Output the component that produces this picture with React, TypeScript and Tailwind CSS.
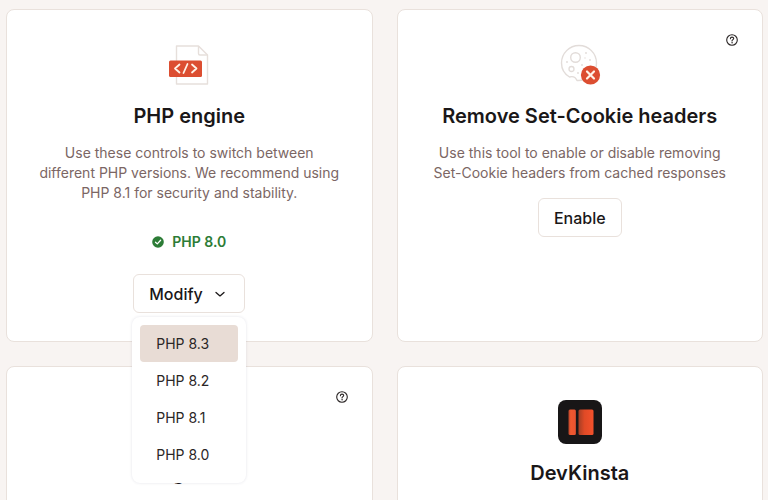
import React, { useState } from 'react';

interface ToolCardProps {
  title: string;
  icon?: React.ReactNode;
  description?: string;
  help?: boolean;
  children?: React.ReactNode;
}

const PHP_VERSIONS = ['PHP 8.3', 'PHP 8.2', 'PHP 8.1', 'PHP 8.0'];

const HelpButton: React.FC = () => (
  <button type="button" aria-label="Help" className="absolute right-6 top-6 text-[#2b2626]">
    <svg className="h-3 w-3" viewBox="0 0 12 12" fill="none" stroke="currentColor" strokeLinecap="round">
      <circle cx="6" cy="6" r="5.3" strokeWidth="1.1" />
      <path d="M4.4 4.7c0-2.1 3.3-2.1 3.3-.1C7.7 5.7 6 5.6 6 7" strokeWidth="1.1" />
      <circle cx="6" cy="8.8" r=".45" fill="currentColor" strokeWidth=".4" />
    </svg>
  </button>
);

const PhpIcon: React.FC = () => (
  <svg className="h-11 w-11" viewBox="0 0 44 44" fill="none">
    <path d="M9.5 3h22l9 9v29h-31z" fill="#fff" stroke="#e6dfdb" strokeWidth="1.4" strokeLinejoin="round" />
    <path d="M31.500 3v7.500a1.500 1.500 0 0 0 1.500 1.500h7.500" stroke="#e6dfdb" strokeWidth="1.4" />
    <rect x="2" y="17.500" width="33" height="16.500" rx="1.500" fill="#dc4e31" />
    <path
      d="M12.500 21.500l-4.500 4 4.500 4M25 21.500l4.500 4-4.500 4M20.500 21l-4 9"
      stroke="#fff3e8"
      strokeWidth="1.8"
      strokeLinecap="round"
      strokeLinejoin="round"
    />
  </svg>
);

const CookieIcon: React.FC = () => (
  <svg className="h-11 w-11" viewBox="0 0 44 44" fill="none">
    <path
      d="M19 37.500c-1.500-3.500-4-4.500-7.500-3.500C6.500 31 3.500 26 3.500 20a17.500 17.500 0 0 1 35 0c0 10-8 18-19.500 17.500z"
      stroke="#e2dcd9"
      strokeWidth="1.4"
      strokeLinejoin="round"
    />
    <circle cx="17.500" cy="14.500" r="4.800" stroke="#e2dcd9" strokeWidth="1.4" />
    <circle cx="13.500" cy="26" r="2.500" stroke="#e2dcd9" strokeWidth="1.3" />
    <g fill="#e2dcd9">
      <circle cx="28" cy="10" r=".9" />
      <circle cx="32" cy="17" r=".9" />
      <circle cx="24" cy="22" r=".9" />
      <circle cx="9" cy="19" r=".9" />
      <circle cx="20" cy="30" r=".9" />
      <circle cx="27" cy="15" r=".7" />
    </g>
    <circle cx="32.500" cy="32" r="9.600" fill="#dc4e31" />
    <path d="M29 28.500l7 7M36 28.500l-7 7" stroke="#fff3e8" strokeWidth="2.200" strokeLinecap="round" />
  </svg>
);

const DevKinstaIcon: React.FC = () => (
  <svg className="h-11 w-11" viewBox="0 0 44 44">
    <defs>
      <linearGradient id="bar-left" x1="0" x2="1">
        <stop offset="0" stopColor="#b8452a" />
        <stop offset=".3" stopColor="#f0582f" />
        <stop offset=".8" stopColor="#ea5430" />
        <stop offset="1" stopColor="#b8452a" />
      </linearGradient>
      <linearGradient id="bar-right" x1="0" x2="1">
        <stop offset="0" stopColor="#a53e25" />
        <stop offset=".4" stopColor="#e04a26" />
        <stop offset="1" stopColor="#f4512c" />
      </linearGradient>
    </defs>
    <rect width="44" height="44" rx="8" fill="#181617" />
    <rect x="10.500" y="9.500" width="7.500" height="25.500" rx="1.500" fill="url(#bar-left)" />
    <rect x="20.500" y="9.500" width="15" height="25.500" rx="1.500" fill="url(#bar-right)" />
  </svg>
);

const ToolCard: React.FC<ToolCardProps> = ({ title, icon, description, help = false, children }) => (
  <section className="relative flex flex-col items-center rounded-lg border border-[#e9e1dc] bg-white px-8 pb-7 pt-[33px] text-center">
    {help && <HelpButton />}
    <div className="h-11">{icon}</div>
    <h2 className="mt-[15px] text-xl leading-7 font-semibold text-[#1a1718]">{title}</h2>
    {description && <p className="mt-[13px] text-sm leading-5 text-[#7b6664]">{description}</p>}
    {children}
  </section>
);

const VersionPicker: React.FC = () => {
  const [open, setOpen] = useState(true);
  const [active, setActive] = useState(PHP_VERSIONS[0]);

  return (
    <div className="relative mt-[22px]">
      <button
        type="button"
        aria-expanded={open}
        onClick={() => setOpen(!open)}
        className="flex h-[39px] w-28 items-center justify-between rounded-md border border-[#e9e1dc] bg-white pl-[15px] pr-[18px] text-base font-medium text-[#1a1718]"
      >
        Modify
        <svg className="h-3 w-3" viewBox="0 0 12 12" fill="none" stroke="currentColor" strokeWidth="1.3" strokeLinecap="round" strokeLinejoin="round">
          <path d="M2 4.400l4 3.500 4-3.500" />
        </svg>
      </button>
      {open && (
        <ul className="absolute -left-px -right-px top-full z-10 mt-1 rounded-lg bg-white px-2 pt-2 pb-2.5 shadow-[0_0_3px_rgba(60,60,100,0.14)]">
          {PHP_VERSIONS.map((version) => (
            <li key={version}>
              <button
                type="button"
                onClick={() => setActive(version)}
                className={`block h-[37px] w-full rounded px-4 text-left text-sm text-[#2b2626] ${version === active ? 'bg-[#e8dcd5]' : ''}`}
              >
                {version}
              </button>
            </li>
          ))}
        </ul>
      )}
    </div>
  );
};

export default function App() {
  return (
    <main className="h-screen overflow-hidden bg-[#f8f4f2] pl-[6px] pr-[5px] pt-[9px] font-['Inter','Liberation_Sans',sans-serif]">
      <div className="grid grid-cols-2 gap-6">
        <ToolCard
          title="PHP engine"
          icon={<PhpIcon />}
          description="Use these controls to switch between different PHP versions. We recommend using PHP 8.1 for security and stability."
        >
          <p className="mt-[29px] flex items-center gap-2 text-sm leading-5 font-semibold text-[#2c7c36]">
            <svg className="h-3 w-3" viewBox="0 0 12 12" fill="none">
              <circle cx="6" cy="6" r="5.800" fill="#2c7c36" />
              <path d="M3.500 6.200l1.800 1.700 3.300-3.600" stroke="#fff" strokeWidth="1.3" strokeLinecap="round" strokeLinejoin="round" />
            </svg>
            PHP 8.0
          </p>
          <VersionPicker />
        </ToolCard>
        <ToolCard
          title="Remove Set-Cookie headers"
          icon={<CookieIcon />}
          description="Use this tool to enable or disable removing Set-Cookie headers from cached responses"
          help
        >
          <button
            type="button"
            className="mt-[15px] h-[39px] rounded-md border border-[#e9e1dc] bg-white px-[15px] text-base font-medium text-[#1a1718]"
          >
            Enable
          </button>
        </ToolCard>
        <ToolCard title="Regional" help />
        <ToolCard title="DevKinsta" icon={<DevKinstaIcon />} />
      </div>
    </main>
  );
}
